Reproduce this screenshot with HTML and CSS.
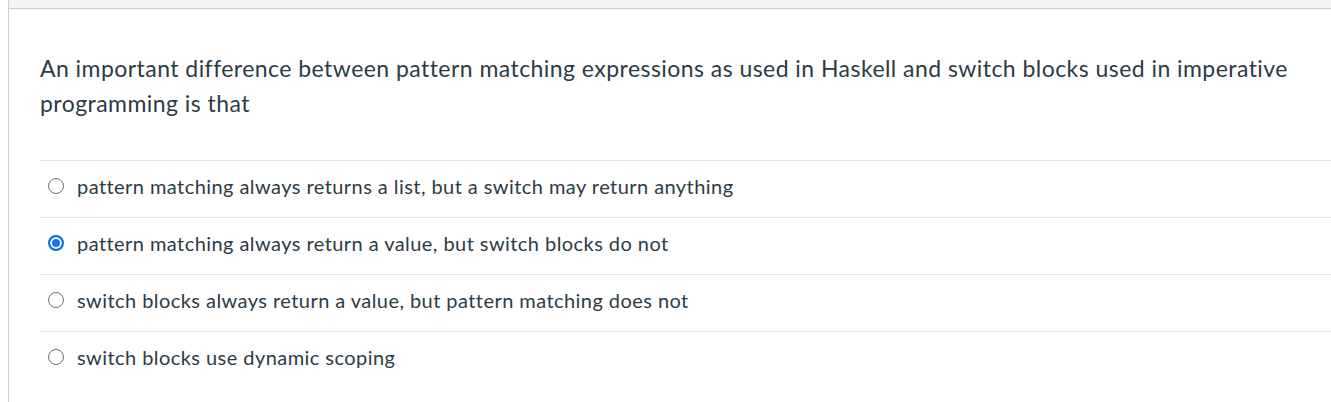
FILE: index.html
```html
<!DOCTYPE html>
<html>
<head>
<meta charset="utf-8">
<link rel="stylesheet" href="styles.css">
</head>
<body>
<div class="page">
  <div class="panel">
    <div class="topstrip"></div>
    <div class="question">
      <p class="qtext">An important difference between pattern matching expressions as used in Haskell and switch blocks used in imperative programming is that</p>
      <div class="answers">
        <div class="answer">
          <span class="radio"></span>
          <span class="label">pattern matching always returns a list, but a switch may return anything</span>
        </div>
        <div class="answer">
          <span class="radio checked"></span>
          <span class="label">pattern matching always return a value, but switch blocks do not</span>
        </div>
        <div class="answer">
          <span class="radio"></span>
          <span class="label">switch blocks always return a value, but pattern matching does not</span>
        </div>
        <div class="answer">
          <span class="radio"></span>
          <span class="label">switch blocks use dynamic scoping</span>
        </div>
      </div>
    </div>
  </div>
</div>
</body>
</html>
```
FILE: styles.css
```css
html, body {
  margin: 0;
  padding: 0;
  background: #ffffff;
  overflow: hidden;
}
.page {
  padding-left: 8px;
  width: 1323px;
}
.panel {
  border-left: 1px solid #c7cdd1;
  min-height: 402px;
}
.topstrip {
  height: 8px;
  background: #f4f4f4;
  border-bottom: 1px solid #c7cdd1;
}
.question {
  padding: 42px 0 0 31px;
  font-family: Lato, "Liberation Sans", sans-serif;
  color: #2d3b45;
}
.qtext {
  margin: 0 0 39px 0;
  font-size: 23px;
  letter-spacing: 0.45px;
  line-height: 35px;
  padding-right: 20px;
}
.answers {
  border-top: 1px solid #e2e4e6;
}
.answer {
  display: flex;
  align-items: center;
  height: 49px;
  padding-bottom: 7px;
  border-bottom: 1px solid #e2e4e6;
  font-size: 20px;
  letter-spacing: 0.44px;
}
.answer:last-child {
  border-bottom: none;
}
.radio {
  width: 16px;
  height: 16px;
  box-sizing: border-box;
  border: 1.5px solid #6f6f6f;
  border-radius: 50%;
  margin: 0 13px 0 8px;
  flex: none;
}
.radio.checked {
  border: 2px solid #0b6de8;
  background: #1a73f0;
  box-shadow: inset 0 0 0 2px #ffffff;
}
.label {
  line-height: 24px;
}
```
